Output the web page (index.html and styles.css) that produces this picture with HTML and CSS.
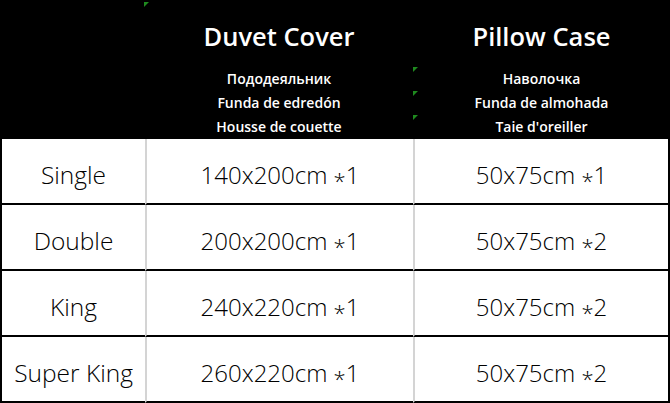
FILE: index.html
```html
<!DOCTYPE html>
<html>
<head>
<meta charset="utf-8">
<link rel="stylesheet" href="styles.css">
</head>
<body>
<div class="sheet">
  <div class="head">
    <div class="hcell"><span class="mark mark-top"></span></div>
    <div class="hcell">
      <div class="title">Duvet Cover</div>
      <div class="sub">Пододеяльник</div>
      <div class="sub">Funda de edredón</div>
      <div class="sub">Housse de couette</div>
    </div>
    <div class="hcell">
      <span class="mark m1"></span><span class="mark m2"></span><span class="mark m3"></span>
      <div class="title">Pillow Case</div>
      <div class="sub">Наволочка</div>
      <div class="sub">Funda de almohada</div>
      <div class="sub">Taie d'oreiller</div>
    </div>
  </div>
  <div class="body">
    <div class="cell c1">Single</div><div class="cell c2">140x200cm <span class="ast">*</span>1</div><div class="cell c3">50x75cm <span class="ast">*</span>1</div>
    <div class="cell c1">Double</div><div class="cell c2">200x200cm <span class="ast">*</span>1</div><div class="cell c3">50x75cm <span class="ast">*</span>2</div>
    <div class="cell c1">King</div><div class="cell c2">240x220cm <span class="ast">*</span>1</div><div class="cell c3">50x75cm <span class="ast">*</span>2</div>
    <div class="cell c1">Super King</div><div class="cell c2">260x220cm <span class="ast">*</span>1</div><div class="cell c3">50x75cm <span class="ast">*</span>2</div>
  </div>
</div>
</body>
</html>
```
FILE: styles.css
```css
html, body { margin: 0; padding: 0; background: #fff; }
.sheet { width: 670px; height: 403px; overflow: hidden; }
.head {
  height: 139px;
  background: #000;
  display: grid;
  grid-template-columns: 145px 268px 257px;
  color: #fff;
  font-family: "Open Sans", "Noto Sans", sans-serif;
}
.hcell {
  position: relative;
  display: flex;
  flex-direction: column;
  align-items: center;
  padding-top: 18px;
}
.title { font-size: 25.5px; font-weight: 600; line-height: 36px; height: 49px; }
.sub { font-size: 14px; font-weight: 600; line-height: 24px; }
.mark {
  position: absolute;
  width: 0; height: 0;
  border-top: 5px solid #1f8a1f;
  border-right: 5px solid transparent;
}
.mark-top { right: -4px; top: 2px; }
.m1 { left: 0; top: 67px; }
.m2 { left: 0; top: 91px; }
.m3 { left: 0; top: 115px; }
.body {
  display: grid;
  grid-template-columns: 143px 268px 255px;
  grid-auto-rows: 66px;
  height: 264px;
  box-sizing: border-box;
  border-left: 2px solid #000;
  border-right: 2px solid #000;
  font-family: "Open Sans", sans-serif;
  font-weight: 350;
  font-size: 24px;
  color: #000;
}
.c1 { font-size: 24.5px; }
.cell {
  text-align: center;
  line-height: 64px;
  padding-top: 4px;
  border-bottom: 2px solid #000;
  box-sizing: border-box;
  white-space: nowrap;
}
.c2, .c3 { border-left: 2px solid #d4d4d4; }
.ast { display: inline-block; line-height: 1; font-size: 22px; transform: translateY(5px); }
```
